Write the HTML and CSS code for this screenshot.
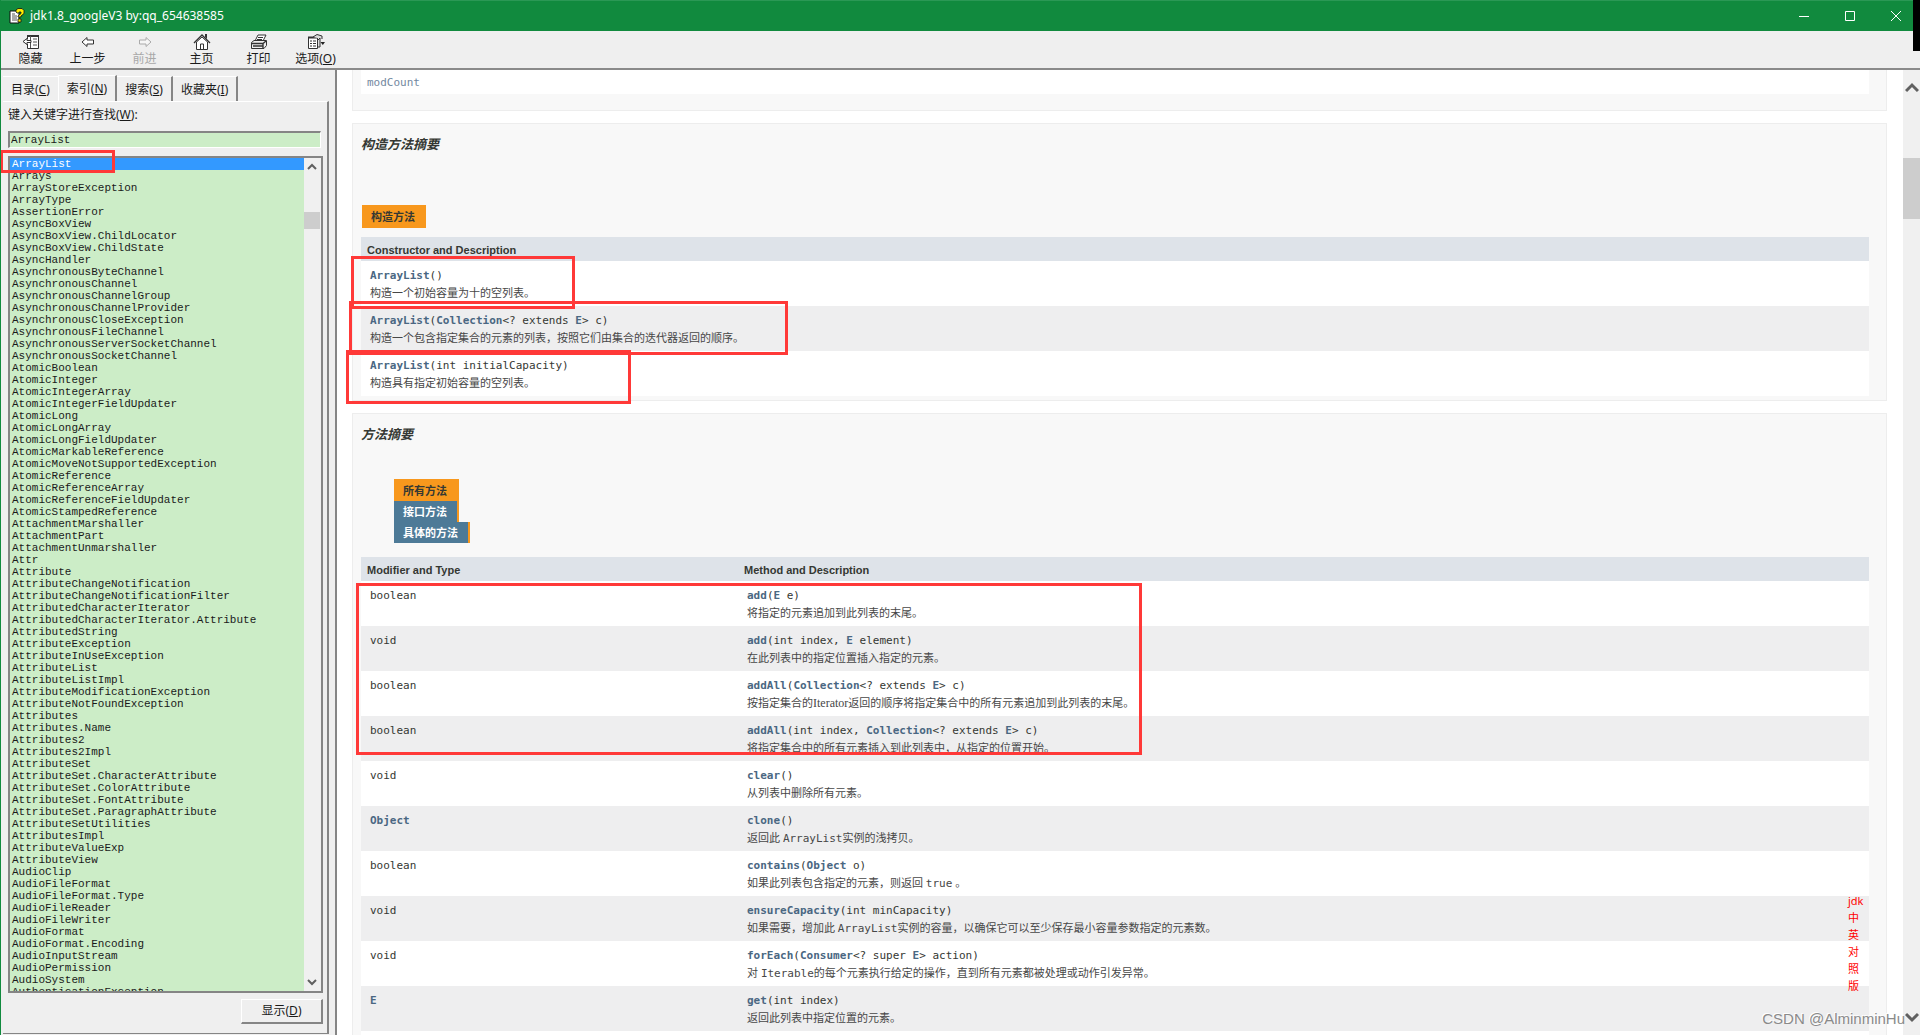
FILE: index.html
```html
<!DOCTYPE html>
<html lang="zh-CN">
<head>
<meta charset="utf-8">
<title>jdk1.8_googleV3 by:qq_654638585</title>
<link rel="stylesheet" href="styles.css">
</head>
<body>
<div class="window">
  <header class="titlebar">
    <svg class="app-icon" width="16" height="16" viewBox="0 0 16 16"><path d="M1 3h7l2 2v10H1z" fill="#fff" stroke="#111"/><path d="M3 6h3M3 8h5M3 10h5M3 12h5" stroke="#555"/><path d="M7 4V2l2-1.500h4l2 2v3l-3 2.500v1H9V8l3-2.500V4h-2v1H8z" fill="#ffee00" stroke="#111" stroke-width=".8"/><path d="M9 11h3v3H9z" fill="#ffee00" stroke="#111" stroke-width=".8"/></svg>
    <h1 class="title">jdk1.8_googleV3 by:qq_654638585</h1>
    <div class="window-buttons">
      <button aria-label="最小化"><svg width="12" height="12" viewBox="0 0 12 12"><path d="M1 6.500h10"/></svg></button>
      <button aria-label="最大化"><svg width="12" height="12" viewBox="0 0 12 12"><path d="M1.500 1.500h9v9h-9z"/></svg></button>
      <button aria-label="关闭"><svg width="12" height="12" viewBox="0 0 12 12"><path d="M1 1l10 10M11 1L1 11"/></svg></button>
    </div>
  </header>

  <nav class="toolbar">
    <button><svg width="18" height="16" viewBox="0 0 18 16"><path d="M5.500 5V1.500h11v13h-11V10" fill="#fff" stroke="#333"/><path d="M5 2h12" stroke="#333" stroke-width="2"/><path d="M8.500 2v12M11 5h4M11 8h4M11 11h4" stroke="#555" fill="none"/><path d="M1 7.500l4-3v2h4v2H5v2z" fill="#fff" stroke="#333"/></svg>隐藏</button>
    <button><svg width="18" height="16" viewBox="0 0 18 16"><path d="M3 8l5-4.500v2.500h6.500v4H8v2.500z" fill="#fff" stroke="#333"/></svg>上一步</button>
    <button class="off" disabled><svg width="18" height="16" viewBox="0 0 18 16"><path d="M15 8l-5-4.500v2.500H3.500v4H10v2.500z" fill="#f6f6f6" stroke="#aaa"/></svg>前进</button>
    <button><svg width="18" height="16" viewBox="0 0 18 16"><path d="M3.500 8v7.500h11V8L9 3z" fill="#fff" stroke="#333"/><path d="M1 9l8-8 8 8" fill="none" stroke="#333" stroke-width="1.300"/><path d="M12 0h2v5l-2-2z" fill="#333"/><path d="M7.500 15v-5h3v5" fill="#fff" stroke="#333"/></svg>主页</button>
    <button><svg width="18" height="16" viewBox="0 0 18 16"><path d="M5 7l3-6h8l-3 6z" fill="#fff" stroke="#333"/><path d="M8 3.500h5M7 5.500h5" stroke="#333"/><path d="M1.500 8.500L4 6.500h12.500v5l-2.500 3H1.500z" fill="#eee" stroke="#333"/><path d="M1.500 9.500h11.500l3-2.500M3 12h10M13 9.500V14" fill="none" stroke="#333" stroke-width="1.400"/></svg>打印</button>
    <button><svg width="18" height="16" viewBox="0 0 18 16"><path d="M1.500 3.500h9v11h-9z" fill="#fff" stroke="#333"/><path d="M1 3.500h10" stroke="#333" stroke-width="2"/><path d="M3 7h2m1 0h3M3 9.500h2m1 0h3M3 12h2m1 0h3" stroke="#333"/><path d="M6 3l4-2.500L15 2v3M11 6l2-2v9h-2" fill="#ddd" stroke="#333"/><path d="M13.500 8h4.500l-2.200 3z" fill="#222"/></svg><span>选项(<u>O</u>)</span></button>
  </nav>

  <div class="body">
    <aside class="sidebar">
      <div class="tabs" role="tablist">
        <button role="tab">目录(<u>C</u>)</button>
        <button role="tab" class="current" aria-selected="true">索引(<u>N</u>)</button>
        <button role="tab">搜索(<u>S</u>)</button>
        <button role="tab">收藏夹(<u>I</u>)</button>
      </div>
      <div class="panel">
        <label for="keyword">键入关键字进行查找(<u>W</u>):</label>
        <input id="keyword" class="keyword" type="text" value="ArrayList">
        <div class="listbox">
          <select size="69" aria-label="索引">
            <option selected>ArrayList</option><option>Arrays</option><option>ArrayStoreException</option><option>ArrayType</option><option>AssertionError</option><option>AsyncBoxView</option><option>AsyncBoxView.ChildLocator</option><option>AsyncBoxView.ChildState</option><option>AsyncHandler</option><option>AsynchronousByteChannel</option><option>AsynchronousChannel</option><option>AsynchronousChannelGroup</option><option>AsynchronousChannelProvider</option><option>AsynchronousCloseException</option><option>AsynchronousFileChannel</option><option>AsynchronousServerSocketChannel</option><option>AsynchronousSocketChannel</option><option>AtomicBoolean</option><option>AtomicInteger</option><option>AtomicIntegerArray</option><option>AtomicIntegerFieldUpdater</option><option>AtomicLong</option><option>AtomicLongArray</option><option>AtomicLongFieldUpdater</option><option>AtomicMarkableReference</option><option>AtomicMoveNotSupportedException</option><option>AtomicReference</option><option>AtomicReferenceArray</option><option>AtomicReferenceFieldUpdater</option><option>AtomicStampedReference</option><option>AttachmentMarshaller</option><option>AttachmentPart</option><option>AttachmentUnmarshaller</option><option>Attr</option><option>Attribute</option><option>AttributeChangeNotification</option><option>AttributeChangeNotificationFilter</option><option>AttributedCharacterIterator</option><option>AttributedCharacterIterator.Attribute</option><option>AttributedString</option><option>AttributeException</option><option>AttributeInUseException</option><option>AttributeList</option><option>AttributeListImpl</option><option>AttributeModificationException</option><option>AttributeNotFoundException</option><option>Attributes</option><option>Attributes.Name</option><option>Attributes2</option><option>Attributes2Impl</option><option>AttributeSet</option><option>AttributeSet.CharacterAttribute</option><option>AttributeSet.ColorAttribute</option><option>AttributeSet.FontAttribute</option><option>AttributeSet.ParagraphAttribute</option><option>AttributeSetUtilities</option><option>AttributesImpl</option><option>AttributeValueExp</option><option>AttributeView</option><option>AudioClip</option><option>AudioFileFormat</option><option>AudioFileFormat.Type</option><option>AudioFileReader</option><option>AudioFileWriter</option><option>AudioFormat</option><option>AudioFormat.Encoding</option><option>AudioInputStream</option><option>AudioPermission</option><option>AudioSystem</option><option>AuthenticationException</option>
          </select>
          <div class="scroll list-scroll">
            <svg width="10" height="8" viewBox="0 0 10 8"><path d="M1 6l4-4 4 4"/></svg>
            <span class="thumb"></span>
            <svg width="10" height="8" viewBox="0 0 10 8"><path d="M1 2l4 4 4-4"/></svg>
          </div>
        </div>
        <button class="show">显示(<u>D</u>)</button>
      </div>
    </aside>

    <main class="doc">
      <div class="page">
        <section class="card fields">
          <div class="field"><a href="#modCount">modCount</a></div>
        </section>

        <section class="card">
          <h2>构造方法摘要</h2>
          <h3 class="caption">构造方法</h3>
          <table>
            <thead><tr><th>Constructor and Description</th></tr></thead>
            <tbody>
              <tr><td><code><a href="#c1">ArrayList</a>()</code><p>构造一个初始容量为十的空列表。</p></td></tr>
              <tr><td><code><a href="#c2">ArrayList</a>(<a href="#Collection">Collection</a>&lt;? extends <a href="#E">E</a>&gt; c)</code><p>构造一个包含指定集合的元素的列表，按照它们由集合的迭代器返回的顺序。</p></td></tr>
              <tr><td><code><a href="#c3">ArrayList</a>(int initialCapacity)</code><p>构造具有指定初始容量的空列表。</p></td></tr>
            </tbody>
          </table>
        </section>

        <section class="card">
          <h2>方法摘要</h2>
          <div class="filters">
            <button class="active">所有方法</button>
            <button>接口方法</button>
            <button>具体的方法</button>
          </div>
          <table>
            <thead><tr><th class="type">Modifier and Type</th><th>Method and Description</th></tr></thead>
            <tbody>
              <tr><td><code>boolean</code></td><td><code><a href="#add">add</a>(<a href="#E">E</a> e)</code><p>将指定的元素追加到此列表的末尾。</p></td></tr>
              <tr><td><code>void</code></td><td><code><a href="#add2">add</a>(int index, <a href="#E">E</a> element)</code><p>在此列表中的指定位置插入指定的元素。</p></td></tr>
              <tr><td><code>boolean</code></td><td><code><a href="#addAll">addAll</a>(<a href="#Collection">Collection</a>&lt;? extends <a href="#E">E</a>&gt; c)</code><p>按指定集合的<span class="serif">Iterator</span>返回的顺序将指定集合中的所有元素追加到此列表的末尾。</p></td></tr>
              <tr><td><code>boolean</code></td><td><code><a href="#addAll2">addAll</a>(int index, <a href="#Collection">Collection</a>&lt;? extends <a href="#E">E</a>&gt; c)</code><p>将指定集合中的所有元素插入到此列表中，从指定的位置开始。</p></td></tr>
              <tr><td><code>void</code></td><td><code><a href="#clear">clear</a>()</code><p>从列表中删除所有元素。</p></td></tr>
              <tr><td><code><a href="#Object">Object</a></code></td><td><code><a href="#clone">clone</a>()</code><p>返回此 <span class="mono">ArrayList</span>实例的浅拷贝。</p></td></tr>
              <tr><td><code>boolean</code></td><td><code><a href="#contains">contains</a>(<a href="#Object">Object</a> o)</code><p>如果此列表包含指定的元素，则返回 <span class="mono">true</span> 。</p></td></tr>
              <tr><td><code>void</code></td><td><code><a href="#ensureCapacity">ensureCapacity</a>(int minCapacity)</code><p>如果需要，增加此 <span class="mono">ArrayList</span>实例的容量，以确保它可以至少保存最小容量参数指定的元素数。</p></td></tr>
              <tr><td><code>void</code></td><td><code><a href="#forEach">forEach</a>(<a href="#Consumer">Consumer</a>&lt;? super <a href="#E">E</a>&gt; action)</code><p>对 <span class="mono">Iterable</span>的每个元素执行给定的操作，直到所有元素都被处理或动作引发异常。</p></td></tr>
              <tr><td><code><a href="#E">E</a></code></td><td><code><a href="#get">get</a>(int index)</code><p>返回此列表中指定位置的元素。</p></td></tr>
              <tr class="rest"><td></td><td></td></tr>
            </tbody>
          </table>
        </section>
      </div>
      <div class="scroll doc-scroll">
        <svg width="14" height="12" viewBox="0 0 14 12"><path d="M1 10l6-6 6 6"/></svg>
        <span class="thumb"></span>
        <svg width="14" height="12" viewBox="0 0 14 12"><path d="M1 2l6 6 6-6"/></svg>
      </div>
    </main>
  </div>

  <div class="edition"><span>jdk</span><span>中</span><span>英</span><span>对</span><span>照</span><span>版</span></div>
  <div class="mark mark-index"></div>
  <div class="mark mark-empty"></div>
  <div class="mark mark-collection"></div>
  <div class="mark mark-capacity"></div>
  <div class="mark mark-methods"></div>
  <div class="corner"></div>
  <div class="watermark">CSDN @AlminminHu</div>
</div>
</body>
</html>
```
FILE: styles.css
```css
* { box-sizing: border-box; }
body {
  margin: 0;
  color: #1a1a1a;
  background: #efefef;
  font: 12px/16px "Noto Sans", "Noto Sans CJK SC", sans-serif;
}
button {
  margin: 0;
  padding: 0;
  border: 0;
  background: none;
  color: inherit;
  font: inherit;
}
a { color: #4a6782; text-decoration: none; }
h1, h2, h3, p { margin: 0; font-weight: normal; }

.window {
  position: relative;
  display: flex;
  flex-direction: column;
  height: 100vh;
  overflow: hidden;
  border-left: 1px solid #118a3e;
}

/* Title bar */
.titlebar {
  display: flex;
  align-items: center;
  flex: none;
  height: 31px;
  padding: 0 0 0 8px;
  gap: 5px;
  color: #fff;
  background: #118a3e;
  border-top: 1px solid #2b9855;
}
.title { font-size: 12px; line-height: 16px; }
.window-buttons { display: flex; margin-left: auto; padding-right: 1px; }
.window-buttons button {
  display: flex;
  align-items: center;
  justify-content: center;
  width: 46px;
  height: 30px;
}
.window-buttons svg { fill: none; stroke: #fff; }

/* Toolbar */
.toolbar {
  display: flex;
  flex: none;
  height: 39px;
  padding-left: 1px;
  border-bottom: 2px solid #8a8a8a;
  background: #efefef;
}
.toolbar button {
  display: flex;
  flex-direction: column;
  align-items: center;
  width: 57px;
  padding-top: 3px;
}
.toolbar svg { margin-bottom: 1px; }
.toolbar .off { color: #a8a8a8; }

.body { display: flex; flex: 1; min-height: 0; }

/* Index sidebar */
.sidebar {
  display: flex;
  flex-direction: column;
  flex: none;
  width: 336px;
  padding: 5px 6px 1px 2px;
  border-right: 2px solid #858585;
}
.tabs { display: flex; align-items: flex-end; flex: none; height: 26px; }
.tabs button {
  height: 25px;
  padding: 2px 8px 0;
  border-top: 1px solid #fff;
  border-right: 2px solid #858585;
}
.tabs button:first-child { border-right: 0; }
.tabs .current { height: 26px; padding-bottom: 2px; border-left: 1px solid #fff; }
.panel {
  display: flex;
  flex-direction: column;
  flex: 1;
  min-height: 0;
  padding: 4px 4px 9px 5px;
  border-top: 1px solid #fff;
  border-right: 2px solid #858585;
  border-bottom: 1px solid #858585;
}
.panel label { line-height: 18px; }
.keyword {
  flex: none;
  height: 17px;
  margin: 7px 2px 8px 0;
  padding: 0 1px;
  border: 1px solid #fff;
  border-top: 2px solid #858585;
  border-left: 2px solid #858585;
  background: #ccedc7;
  color: #1a1a1a;
  font: 11px/14px "Liberation Mono", monospace;
}
.listbox {
  display: flex;
  flex: 1;
  min-height: 0;
  padding-right: 1px;
  border: 2px solid #858585;
}
.listbox select {
  flex: 1;
  min-width: 0;
  height: 100%;
  padding: 0;
  border: 0;
  border-radius: 0;
  outline: 0;
  overflow: hidden;
  background: #ccedc7;
  color: #1a1a1a;
  font: 11px/12px "Liberation Mono", monospace;
}
.listbox option { height: 12px; min-height: 12px; padding: 0 2px; line-height: 12px; }
.listbox option:checked { color: #fff; background: #3399ff linear-gradient(#3399ff, #3399ff); }
.show {
  align-self: flex-end;
  flex: none;
  width: 82px;
  height: 25px;
  margin-top: 6px;
  border: 1px solid #fff;
  border-right: 2px solid #858585;
  border-bottom: 2px solid #858585;
}

/* Scroll bars */
.scroll {
  display: flex;
  flex-direction: column;
  align-items: center;
  flex: none;
  background: #f0f0f0;
}
.scroll svg { flex: none; fill: none; stroke: #606060; stroke-width: 2; }
.scroll svg:last-child { margin-top: auto; }
.thumb { width: 100%; background: #cdcdcd; }
.list-scroll { width: 16px; padding: 5px 0; }
.list-scroll .thumb { height: 17px; margin-top: 41px; }
.doc-scroll { width: 17px; padding: 11px 0; }
.doc-scroll svg { stroke-width: 3; }
.doc-scroll .thumb { height: 61px; margin-top: 65px; }

/* Documentation page */
.doc { display: flex; flex: 1; min-width: 0; overflow: hidden; background: #fff; }
.page {
  display: flex;
  flex-direction: column;
  gap: 12px;
  flex: 1;
  min-width: 0;
  padding: 0 16px 0 15px;
  color: #353833;
}
.card {
  flex: none;
  padding: 10px 17px 4px 8px;
  border: 1px solid #ededed;
  background: #f8f8f8;
}
.fields { padding-top: 0; padding-bottom: 16px; border-top: 0; }
.field {
  height: 24px;
  padding: 3px 6px 1px;
  background: #fff;
  font: 11px/20px "DejaVu Sans Mono", monospace;
}
.field a { color: #7288a0; }
.card h2 { font-size: 13px; line-height: 20px; font-weight: bold; font-style: italic; }
.caption {
  width: 64px;
  height: 23px;
  margin: 51px 0 9px 1px;
  padding-left: 9px;
  background: #f8981d;
  font-size: 11px;
  line-height: 23px;
  font-weight: bold;
}
.filters {
  display: flex;
  flex-direction: column;
  align-items: flex-start;
  margin: 35px 0 14px 33px;
}
.filters button {
  height: 21px;
  padding: 0 10px 0 9px;
  border-right: 2px solid #f8981d;
  color: #fff;
  background: #4d7a97;
  font-size: 11px;
  line-height: 21px;
  font-weight: bold;
}
.filters .active { height: 22px; color: #353833; background: #f8981d; }
table { width: 100%; border-collapse: collapse; table-layout: fixed; }
th {
  height: 24px;
  padding: 3px 6px 1px;
  background: #dee3e9;
  font: bold 11px/20px "Liberation Sans", "Noto Sans CJK SC", sans-serif;
  text-align: left;
}
.type { width: 25%; }
td { height: 45px; padding: 6px 9px 5px; vertical-align: top; background: #fff; }
tbody tr:nth-child(even) td { background: #eeeeef; }
tbody .rest td { background: #fff; }
code { display: block; font: 11px/18px "DejaVu Sans Mono", monospace; }
code a { font-weight: bold; }
td p { height: 16px; color: #474747; font-size: 11px; line-height: 16px; }
.mono { font-family: "DejaVu Sans Mono", monospace; }
.serif { font-family: "Liberation Serif", serif; font-size: 12px; }

/* Floating label, highlight frames and signature */
.edition {
  position: absolute;
  right: 57px;
  bottom: 41px;
  display: flex;
  flex-direction: column;
  width: 15px;
  color: #f00;
  font-size: 11px;
  line-height: 17px;
}
.mark { position: absolute; border: 3px solid #ff3938; }
.mark-index { left: -1px; top: 150px; width: 115px; height: 23px; }
.mark-empty { left: 350px; top: 256px; width: 224px; height: 53px; }
.mark-collection { left: 348px; top: 301px; width: 439px; height: 54px; }
.mark-capacity { left: 345px; top: 350px; width: 285px; height: 54px; }
.mark-methods { left: 355px; top: 583px; width: 786px; height: 172px; }
.corner { position: absolute; top: 0; right: 0; width: 7px; height: 51px; background: #000; }
.watermark {
  position: absolute;
  right: 15px;
  bottom: 6px;
  color: #8a8a8a;
  text-shadow: -1px -1px 0 #fff;
  font: 15px/20px "Liberation Sans", sans-serif;
}
```
